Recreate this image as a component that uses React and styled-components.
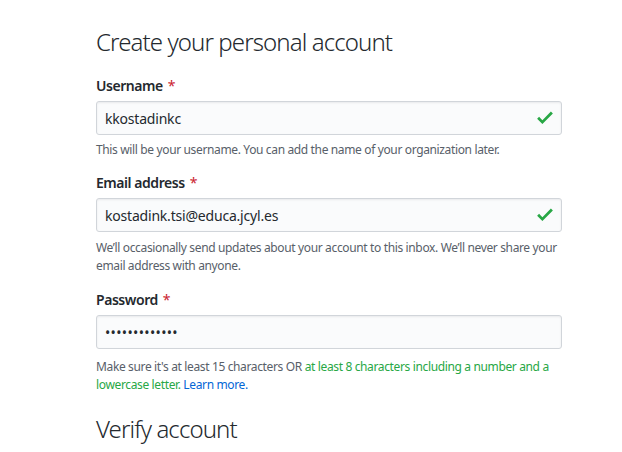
import React from "react";
import styled, { createGlobalStyle } from "styled-components";

const Global = createGlobalStyle`
  html, body { margin: 0; padding: 0; background: #fff; }
  body {
    font-family: "Noto Sans", "Open Sans", "Liberation Sans", sans-serif;
    color: #24292e;
    -webkit-font-smoothing: antialiased;
  }
`;

const Page = styled.div`
  width: 622px;
  height: 452px;
  overflow: hidden;
  box-sizing: border-box;
  padding: 26px 0 0 96px;
`;

const Form = styled.div`
  width: 466px;
  display: flex;
  flex-direction: column;
`;

const Heading = styled.h2`
  margin: 0;
  font-size: 24px;
  line-height: 32px;
  font-weight: 300;
  color: #24292e;
  letter-spacing: -0.9px;
`;

const Group = styled.div`
  display: flex;
  flex-direction: column;
  margin-top: ${(p) => p.$mt || 0}px;
`;

const Label = styled.label`
  font-size: 14px;
  line-height: 20px;
  font-weight: 600;
  color: #24292e;
  margin-bottom: 5px;
  letter-spacing: -0.45px;
`;

const Required = styled.span`
  color: #cb2431;
  font-weight: 400;
  margin-left: 5px;
`;

const Field = styled.div`
  position: relative;
  width: 466px;
`;

const Input = styled.input`
  box-sizing: border-box;
  width: 100%;
  height: 34px;
  padding: 6px 8px;
  font-family: inherit;
  font-size: 14px;
  line-height: 20px;
  color: #24292e;
  background: #fafbfc;
  border: 1px solid #d1d5da;
  border-radius: 3px;
  box-shadow: inset 0 1px 2px rgba(27, 31, 35, 0.075);
  outline: none;
  letter-spacing: ${(p) => (p.type === "password" ? "0.35px" : "-0.2px")};
`;

const Check = styled.svg`
  position: absolute;
  right: 9px;
  top: 6px;
  width: 16px;
  height: 21px;
  fill: #28a745;
`;

const Note = styled.p`
  margin: ${(p) => p.$mt || 6}px 0 0;
  font-size: 12px;
  line-height: 18px;
  color: #586069;
  letter-spacing: -0.36px;
`;

const Green = styled.span`
  color: #28a745;
`;

const Link = styled.a`
  color: #0366d6;
  text-decoration: none;
`;

const CheckIcon = () => (
  <Check viewBox="0 0 12 16" aria-hidden="true">
    <path d="M12 5l-8 8-4-4 1.5-1.5L4 10l6.5-6.5L12 5z" />
  </Check>
);

export default function App() {
  return (
    <>
      <Global />
      <Page>
        <Form>
          <Heading>Create your personal account</Heading>
          <Group $mt={18}>
            <Label>
              Username<Required>*</Required>
            </Label>
            <Field>
              <Input type="text" readOnly value="kkostadinkc" />
              <CheckIcon />
            </Field>
            <Note>This will be your username. You can add the name of your organization later.</Note>
          </Group>
          <Group $mt={14}>
            <Label>
              Email address<Required>*</Required>
            </Label>
            <Field>
              <Input type="text" readOnly value="kostadink.tsi@educa.jcyl.es" />
              <CheckIcon />
            </Field>
            <Note $mt={7}>
              We’ll occasionally send updates about your account to this inbox. We’ll never share your
              email address with anyone.
            </Note>
          </Group>
          <Group $mt={15}>
            <Label>
              Password<Required>*</Required>
            </Label>
            <Field>
              <Input type="password" readOnly value="kostadink2020" />
            </Field>
            <Note $mt={9}>
              Make sure it's at least 15 characters OR{" "}
              <Green>at least 8 characters including a number and a lowercase letter.</Green>{" "}
              <Link href="#">Learn more.</Link>
            </Note>
          </Group>
          <Group $mt={19}>
            <Heading>Verify account</Heading>
          </Group>
        </Form>
      </Page>
    </>
  );
}
